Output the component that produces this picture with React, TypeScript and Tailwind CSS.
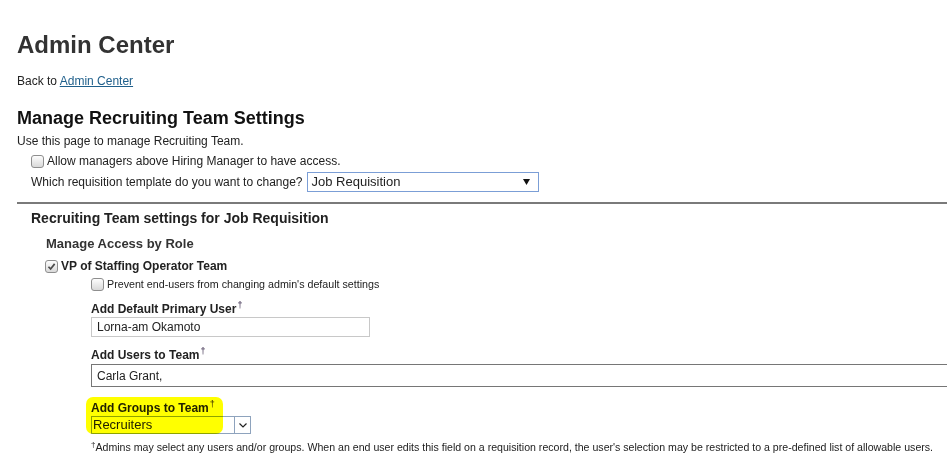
import React from 'react';

const Checkbox = ({ checked = false }: { checked?: boolean }) => (
  <span className="flex h-[13px] w-[13px] shrink-0 items-center justify-center rounded-[3px] border border-[#8e8e8e] bg-linear-to-b from-[#fdfdfd] to-[#d9d9d9]">
    {checked && (
      <svg viewBox="0 0 10 10" className="h-[9px] w-[9px]">
        <path d="M1.6 5.3 L4 7.7 L8.5 2.1" fill="none" stroke="#4b4b4b" strokeWidth="1.9" />
      </svg>
    )}
  </span>
);

// small raised dagger after field labels
const Dagger = () => (
  <span className="-mt-[7px] ml-[1px] text-[9px] font-normal leading-none text-[#2b1b3f]">†</span>
);

export default function App() {
  return (
    <div className="h-[461px] w-full overflow-hidden bg-white font-['Liberation_Sans',Arial,sans-serif] text-[#222]">
      <div className="w-[990px] pl-[17px]">
        <h1 className="pt-[31px] text-[24px] font-bold leading-[28px] text-[#333]">Admin Center</h1>
        <p className="mt-[15px] text-[12px] leading-[14px]">
          Back to <a href="#" className="text-[#1f5f8b] underline">Admin Center</a>
        </p>

        <h2 className="mt-[19px] text-[18px] font-bold leading-[22px] text-[#111]">Manage Recruiting Team Settings</h2>
        <p className="mt-[5px] text-[12px] leading-[14px]">Use this page to manage Recruiting Team.</p>

        <div className="pl-[14px]">
          <label className="mt-[5px] flex h-[16px] items-center gap-[3px] text-[12px]">
            <Checkbox />
            <span>Allow managers above Hiring Manager to have access.</span>
          </label>
          <div className="mt-[3px] flex h-[20px] items-center text-[12px]">
            <span>Which requisition template do you want to change?</span>
            <div className="ml-[4px] flex h-[20px] w-[232px] items-center justify-between border border-[#7b9ed6] pl-[4px] pr-[8px] text-[13px]">
              <span>Job Requisition</span>
              <svg viewBox="0 0 7 6" className="h-[6px] w-[7px]">
                <path d="M0 0 L7 0 L3.5 6 Z" fill="#111" />
              </svg>
            </div>
          </div>
        </div>

        <div className="mt-[10px] h-[2px] bg-[#7a7a7a]" />

        <section className="pl-[14px]">
          <h3 className="mt-[6px] flex h-[16px] items-center text-[14px] font-bold">Recruiting Team settings for Job Requisition</h3>
          <div className="pl-[15px]">
            <h4 className="mt-[10px] flex h-[16px] items-center text-[13px] font-bold text-[#333]">Manage Access by Role</h4>
            <label className="-ml-[1px] mt-[6px] flex h-[16px] items-center gap-[3px] text-[12px] font-bold">
              <Checkbox checked />
              <span>VP of Staffing Operator Team</span>
            </label>

            <div className="pl-[45px]">
              <label className="mt-[3px] flex h-[14px] items-center gap-[3px] text-[10.7px]">
                <Checkbox />
                <span>Prevent end-users from changing admin's default settings</span>
              </label>

              <div className="mt-[11px] flex h-[14px] items-center text-[12px] font-bold">
                Add Default Primary User<Dagger />
              </div>
              <div className="mt-[1px] flex h-[20px] w-[279px] items-center border border-[#c8c8c8] px-[5px] text-[12px]">
                Lorna-am Okamoto
              </div>

              <div className="mt-[11px] flex h-[14px] items-center text-[12px] font-bold">
                Add Users to Team<Dagger />
              </div>
              <div className="mt-[2px] flex h-[23px] w-[880px] items-center border border-[#767676] px-[5px] text-[12px]">
                Carla Grant,
              </div>

              <div className="relative">
                <div className="mt-[14px] flex h-[14px] items-center text-[12px] font-bold">
                  Add Groups to Team<Dagger />
                </div>
                <div className="mt-[1px] flex h-[18px] w-[160px] items-stretch border border-[#8ea3bd] text-[13px]">
                  <span className="flex flex-1 items-center pl-[1px]">Recruiters</span>
                  <span className="flex w-[16px] items-center justify-center border-l border-[#8ea3bd] bg-white">
                    <svg viewBox="0 0 8 5" className="h-[5px] w-[8px]">
                      <path d="M0.5 0.5 L4 4 L7.5 0.5" fill="none" stroke="#222" strokeWidth="1.2" />
                    </svg>
                  </span>
                </div>
                {/* marker highlight over label + select */}
                <div className="pointer-events-none absolute -left-[5px] -top-[4px] h-[37px] w-[137px] rounded-[7px] bg-[#ffff00] mix-blend-multiply" />
              </div>

              <p className="mt-[7px] flex h-[13px] items-center whitespace-nowrap text-[10.6px]">
                <span className="-mt-[5px] text-[8px] leading-none">†</span>Admins may select any users and/or groups. When an end user edits this field on a requisition record, the user's selection may be restricted to a pre-defined list of allowable users.
              </p>
            </div>
          </div>
        </section>
      </div>
    </div>
  );
}
